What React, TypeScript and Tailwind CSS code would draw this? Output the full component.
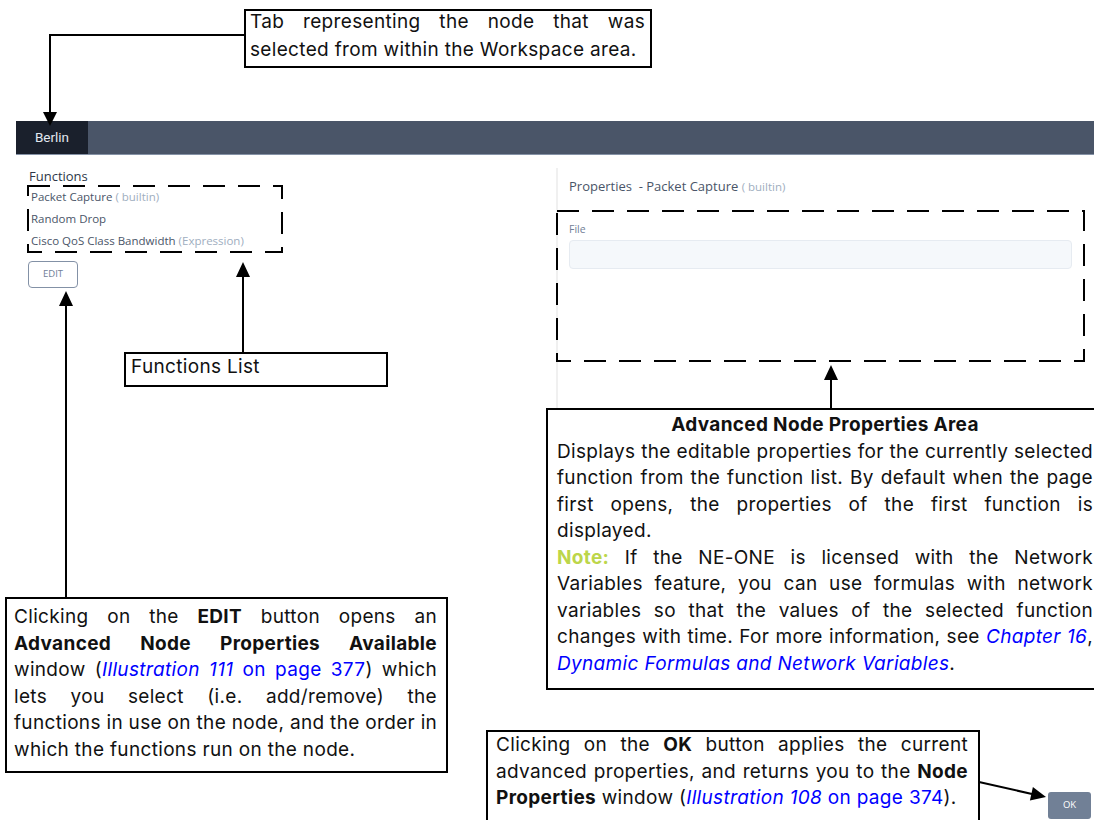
import type { ReactNode } from 'react';

const J = ({ children }: { children: ReactNode }) => (
  <div className="whitespace-nowrap text-justify [text-align-last:justify]">{children}</div>
);

const L = ({ children }: { children: ReactNode }) => <div className="whitespace-nowrap text-left">{children}</div>;

const Link = ({ em, rest }: { em: string; rest?: string }) => (
  <span className="text-[#0000ff]">
    <i>{em}</i>
    {rest}
  </span>
);

const functions = [
  { name: 'Packet Capture', kind: '( builtin)' },
  { name: 'Random Drop', kind: '' },
  { name: 'Cisco QoS Class Bandwidth', kind: '(Expression)' },
];

const Callout = ({ className, children }: { className: string; children: ReactNode }) => (
  <div
    className={`absolute border-2 border-black bg-white text-[19px] leading-[26.5px] tracking-[0.33px] text-[#111] font-['Inter','Liberation_Sans',sans-serif] ${className}`}
  >
    {children}
  </div>
);

export default function App() {
  return (
    <div className="relative flex h-[820px] w-[1094px] flex-col overflow-hidden bg-white font-['Open_Sans','Liberation_Sans',sans-serif]">
      {/* tab bar */}
      <div className="pl-[16px] pt-[121px]">
        <div className="flex h-[34px] border-b border-[#8592a6] bg-[#4a5568]">
          <div className="flex w-[72px] items-center justify-center bg-[#1a202c] font-['Roboto',sans-serif] text-[13.5px] text-[#e2e8f0]">
            Berlin
          </div>
        </div>
      </div>

      {/* body */}
      <div className="flex">
        <div className="w-[556px] pl-[29px] pt-[13px]">
          <div className="text-[13px] leading-[16px] text-[#2d3748]">Functions</div>
          <div className="mt-[2px] pl-[2px]">
            {functions.map((f) => (
              <div key={f.name} className="text-[11.5px] leading-[22px] text-[#4a5568]">
                {f.name} {f.kind && <span className="text-[#a0aec0]">{f.kind}</span>}
              </div>
            ))}
          </div>
          <button className="ml-[-1px] mt-[9px] flex h-[27px] w-[50px] items-center justify-center rounded-[4px] border-[1.5px] border-[#8391a6] text-[9.5px] text-[#718096]">
            EDIT
          </button>
        </div>

        <div className="mt-[13px] h-[240px] flex-1 border-l-2 border-[#f0f0f0] pl-[11px] pr-[22px] pt-[10px]">
          <div className="text-[13px] leading-[16px] text-[#4a5568]">
            Properties&nbsp; - Packet Capture <span className="text-[11.5px] text-[#a0aec0]">( builtin)</span>
          </div>
          <div className="mt-[27px] text-[10.5px] leading-[14px] text-[#718096]">File</div>
          <div className="mt-[4px] h-[29px] rounded-[4px] border border-[#e6ebf1] bg-[#f5f8fb]" />
        </div>
      </div>

      <div className="mt-auto flex justify-end pb-[1px] pr-[3px]">
        <button className="flex h-[27px] w-[43px] items-center justify-center rounded-[3px] bg-[#718096] text-[9.5px] text-white">
          OK
        </button>
      </div>

      {/* arrows and dashed outlines */}
      <svg className="pointer-events-none absolute left-0 top-0" width="1094" height="820">
        <g fill="none" stroke="#000" strokeWidth="2">
          <path d="M244 35 H50 V113" />
          <path d="M243 352 V276" />
          <path d="M66 597 V305" />
          <path d="M831 408 V379" />
          <path d="M979 782 L1032 794" />
          <rect x="28" y="186" width="254" height="66" strokeDasharray="22 13" />
          <rect x="557" y="211" width="527" height="150" strokeDasharray="22 13" />
        </g>
        <g fill="#000">
          <polygon points="43,112 57,112 50,126" />
          <polygon points="236,277 250,277 243,262" />
          <polygon points="59,306 73,306 66,291" />
          <polygon points="824,380 838,380 831,365" />
          <polygon points="1029.9,800.5 1032.9,786.9 1046,797" />
        </g>
      </svg>

      {/* callouts */}
      <Callout className="left-[244px] top-[9px] h-[59px] w-[408px] pl-[4px] pr-[5px]">
        <div className="mt-[-3px] leading-[28px]">
          <J>Tab representing the node that was</J>
          <L>selected from within the Workspace area.</L>
        </div>
      </Callout>

      <Callout className="left-[124px] top-[352px] h-[35px] w-[264px] pl-[5px] leading-[24px]">
        Functions List
      </Callout>

      <Callout className="left-[5px] top-[597px] h-[176px] w-[443px] pl-[7px] pr-[9px] pt-[5px]">
        <J>
          Clicking on the <b>EDIT</b> button opens an
        </J>
        <J>
          <b>Advanced Node Properties Available</b>
        </J>
        <J>
          window (<Link em="Illustration 111" rest=" on page 377" />) which
        </J>
        <J>lets you select (i.e. add/remove) the</J>
        <J>functions in use on the node, and the order in</J>
        <L>which the functions run on the node.</L>
      </Callout>

      <Callout className="left-[546px] top-[408px] h-[282px] w-[558px] pl-[9px] pr-[9px] pt-[2px]">
        <div className="text-center font-bold">Advanced Node Properties Area</div>
        <J>Displays the editable properties for the currently selected</J>
        <J>function from the function list. By default when the page</J>
        <J>first opens, the properties of the first function is</J>
        <L>displayed.</L>
        <J>
          <b className="text-[#bcd64a]">Note:</b> If the NE-ONE is licensed with the Network
        </J>
        <J>Variables feature, you can use formulas with network</J>
        <J>variables so that the values of the selected function</J>
        <J>
          changes with time. For more information, see <Link em="Chapter 16" />,
        </J>
        <L>
          <Link em="Dynamic Formulas and Network Variables" />.
        </L>
      </Callout>

      <Callout className="left-[486px] top-[730px] h-[100px] w-[494px] pl-[8px] pr-[10px]">
        <J>
          Clicking on the <b>OK</b> button applies the current
        </J>
        <J>
          advanced properties, and returns you to the <b>Node</b>
        </J>
        <L>
          <b>Properties</b> window (<Link em="Illustration 108" rest=" on page 374" />).
        </L>
      </Callout>
    </div>
  );
}
